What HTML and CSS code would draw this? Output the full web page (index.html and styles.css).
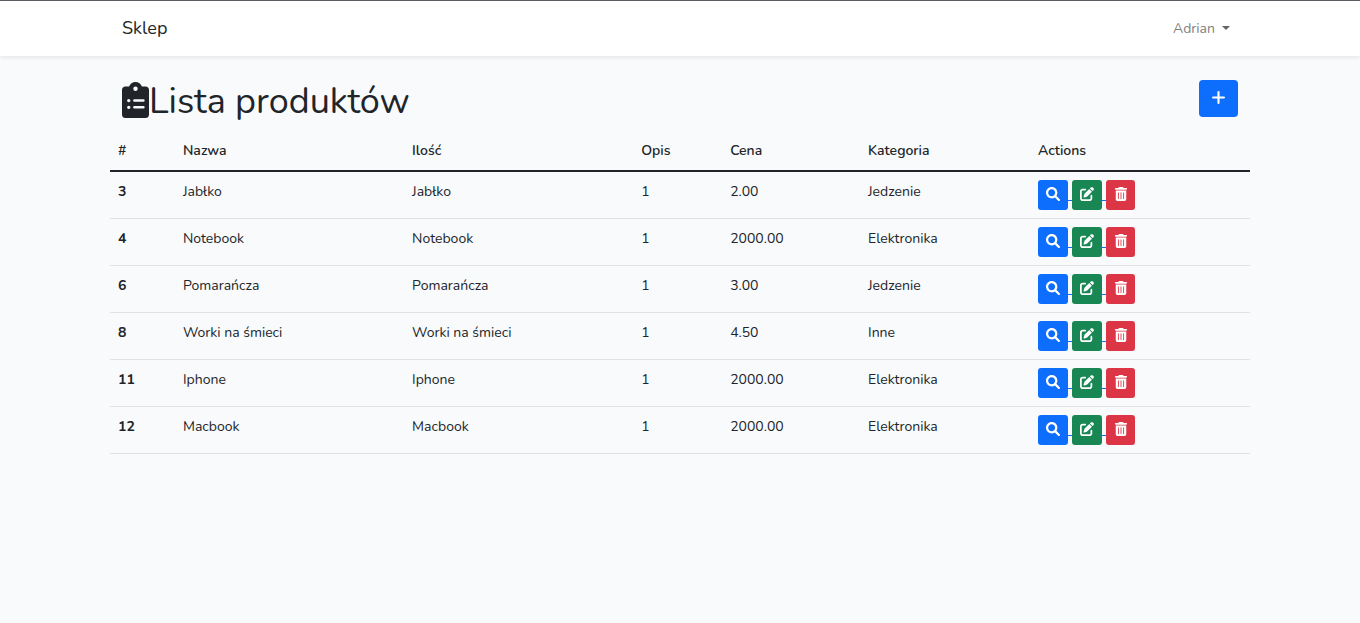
FILE: index.html
```html
<!DOCTYPE html>
<html lang="pl">
<head>
<meta charset="utf-8">
<meta name="viewport" content="width=device-width, initial-scale=1">
<title>Sklep</title>
<link rel="stylesheet" href="styles.css">
</head>
<body>
<svg class="sprite" aria-hidden="true">
  <symbol id="search" viewBox="0 0 512 512"><path d="M500.3 443.7l-119.7-119.7c27.22-40.41 40.65-90.9 33.46-144.7C401.8 87.79 326.8 13.32 235.2 1.723C99.01-15.51-15.51 99.01 1.724 235.2c11.6 91.64 86.08 166.7 177.6 178.9c53.8 7.189 104.3-6.236 144.7-33.46l119.7 119.7c15.62 15.62 40.95 15.62 56.57 0C515.9 484.7 515.9 459.3 500.3 443.7zM79.1 208c0-70.58 57.42-128 128-128s128 57.42 128 128c0 70.58-57.42 128-128 128S79.1 278.6 79.1 208z"/></symbol>
  <symbol id="edit" viewBox="0 0 512 512"><path d="M490.3 40.4C512.2 62.27 512.2 97.73 490.3 119.6L460.3 149.7L362.3 51.72L392.4 21.66C414.3-.2135 449.7-.2135 471.6 21.66L490.3 40.4zM172.4 241.7L339.7 74.34L437.7 172.3L270.3 339.6C264.2 345.8 256.7 350.4 248.4 353.2L159.6 382.8C150.1 385.6 141.5 383.4 135 376.1C128.6 370.5 126.4 361 129.2 352.4L158.8 263.6C161.6 255.3 166.2 247.8 172.4 241.7V241.7zM192 63.1C209.7 63.1 224 78.33 224 95.1C224 113.7 209.7 127.1 192 127.1H96C78.33 127.1 64 142.3 64 159.1V416C64 433.7 78.33 448 96 448H352C369.7 448 384 433.7 384 416V319.1C384 302.3 398.3 287.1 416 287.1C433.7 287.1 448 302.3 448 319.1V416C448 469 405 512 352 512H96C42.98 512 0 469 0 416V159.1C0 106.1 42.98 63.1 96 63.1H192z"/></symbol>
  <symbol id="trash" viewBox="0 0 448 512"><path fill-rule="evenodd" d="M135.2 17.7C140.6 6.8 151.7 0 163.8 0H284.2c12.1 0 23.2 6.8 28.6 17.7L320 32h96c17.7 0 32 14.3 32 32s-14.3 32-32 32H32C14.3 96 0 81.7 0 64S14.3 32 32 32h96l7.2-14.3zM32 128H416V448c0 35.3-28.7 64-64 64H96c-35.3 0-64-28.7-64-64V128zm96 64c-8.8 0-16 7.2-16 16V432c0 8.8 7.2 16 16 16s16-7.2 16-16V208c0-8.8-7.2-16-16-16zm96 0c-8.8 0-16 7.2-16 16V432c0 8.8 7.2 16 16 16s16-7.2 16-16V208c0-8.8-7.2-16-16-16zm96 0c-8.8 0-16 7.2-16 16V432c0 8.8 7.2 16 16 16s16-7.2 16-16V208c0-8.8-7.2-16-16-16z"/></symbol>
</svg>

<header class="navbar">
  <nav class="container navbar-inner">
    <a class="brand" href="#">Sklep</a>
    <button class="user-menu" type="button" aria-haspopup="true">Adrian <span class="caret"></span></button>
  </nav>
</header>

<main class="container">
  <div class="page-head">
    <h1 class="title">
      <svg class="title-icon" viewBox="0 0 384 512" aria-hidden="true"><path fill-rule="evenodd" d="M336 64h-53C270 27 234 0 192 0s-78 27-91 64H48C21.500 64 0 85.500 0 112v352c0 26.500 21.500 48 48 48h288c26.500 0 48-21.500 48-48V112c0-26.500-21.500-48-48-48zM192 64a32 32 0 1 1 0 64 32 32 0 1 1 0-64zM96 240a24 24 0 1 1 0 48 24 24 0 1 1 0-48zM96 336a24 24 0 1 1 0 48 24 24 0 1 1 0-48zM176 246h128a18 18 0 0 1 0 36H176a18 18 0 0 1 0-36zM176 342h128a18 18 0 0 1 0 36H176a18 18 0 0 1 0-36z"/></svg>Lista produktów</h1>
    <button class="btn btn-add" type="button" aria-label="Dodaj"><svg class="plus" viewBox="0 0 12 12" aria-hidden="true"><path d="M6 1v10M1 6h10"/></svg></button>
  </div>

  <table class="products">
    <colgroup><col class="col-id"><col class="col-name"><col class="col-name"><col class="col-desc"><col class="col-price"><col class="col-category"><col></colgroup>
    <thead>
      <tr><th scope="col">#</th><th scope="col">Nazwa</th><th scope="col">Ilość</th><th scope="col">Opis</th><th scope="col">Cena</th><th scope="col">Kategoria</th><th scope="col">Actions</th></tr>
    </thead>
    <tbody>
      <tr><th scope="row">3</th><td>Jabłko</td><td>Jabłko</td><td>1</td><td>2.00</td><td>Jedzenie</td><td><div class="actions"><button class="btn view" type="button" aria-label="Pokaż"><svg class="icon"><use href="#search"/></svg></button><span class="joint"></span><button class="btn edit" type="button" aria-label="Edytuj"><svg class="icon"><use href="#edit"/></svg></button><span class="joint"></span><button class="btn delete" type="button" aria-label="Usuń"><svg class="icon"><use href="#trash"/></svg></button></div></td></tr>
      <tr><th scope="row">4</th><td>Notebook</td><td>Notebook</td><td>1</td><td>2000.00</td><td>Elektronika</td><td><div class="actions"><button class="btn view" type="button" aria-label="Pokaż"><svg class="icon"><use href="#search"/></svg></button><span class="joint"></span><button class="btn edit" type="button" aria-label="Edytuj"><svg class="icon"><use href="#edit"/></svg></button><span class="joint"></span><button class="btn delete" type="button" aria-label="Usuń"><svg class="icon"><use href="#trash"/></svg></button></div></td></tr>
      <tr><th scope="row">6</th><td>Pomarańcza</td><td>Pomarańcza</td><td>1</td><td>3.00</td><td>Jedzenie</td><td><div class="actions"><button class="btn view" type="button" aria-label="Pokaż"><svg class="icon"><use href="#search"/></svg></button><span class="joint"></span><button class="btn edit" type="button" aria-label="Edytuj"><svg class="icon"><use href="#edit"/></svg></button><span class="joint"></span><button class="btn delete" type="button" aria-label="Usuń"><svg class="icon"><use href="#trash"/></svg></button></div></td></tr>
      <tr><th scope="row">8</th><td>Worki na śmieci</td><td>Worki na śmieci</td><td>1</td><td>4.50</td><td>Inne</td><td><div class="actions"><button class="btn view" type="button" aria-label="Pokaż"><svg class="icon"><use href="#search"/></svg></button><span class="joint"></span><button class="btn edit" type="button" aria-label="Edytuj"><svg class="icon"><use href="#edit"/></svg></button><span class="joint"></span><button class="btn delete" type="button" aria-label="Usuń"><svg class="icon"><use href="#trash"/></svg></button></div></td></tr>
      <tr><th scope="row">11</th><td>Iphone</td><td>Iphone</td><td>1</td><td>2000.00</td><td>Elektronika</td><td><div class="actions"><button class="btn view" type="button" aria-label="Pokaż"><svg class="icon"><use href="#search"/></svg></button><span class="joint"></span><button class="btn edit" type="button" aria-label="Edytuj"><svg class="icon"><use href="#edit"/></svg></button><span class="joint"></span><button class="btn delete" type="button" aria-label="Usuń"><svg class="icon"><use href="#trash"/></svg></button></div></td></tr>
      <tr><th scope="row">12</th><td>Macbook</td><td>Macbook</td><td>1</td><td>2000.00</td><td>Elektronika</td><td><div class="actions"><button class="btn view" type="button" aria-label="Pokaż"><svg class="icon"><use href="#search"/></svg></button><span class="joint"></span><button class="btn edit" type="button" aria-label="Edytuj"><svg class="icon"><use href="#edit"/></svg></button><span class="joint"></span><button class="btn delete" type="button" aria-label="Usuń"><svg class="icon"><use href="#trash"/></svg></button></div></td></tr>
    </tbody>
  </table>
</main>
</body>
</html>
```
FILE: styles.css
```css
* { box-sizing: border-box; }

body {
  margin: 0;
  background: #f8fafc;
  color: #212529;
  font-family: Nunito, "Open Sans", "Noto Sans", sans-serif;
  font-size: 14px;
  font-weight: 400;
  line-height: 23px;
}

.sprite { display: none; }

.container {
  max-width: 1140px;
  margin: 0 auto;
}

.navbar {
  border-top: 1px solid #5d5b62;
  background: #fff;
  box-shadow: 0 2px 4px rgba(0, 0, 0, 0.075);
}

.navbar-inner {
  display: flex;
  align-items: center;
  justify-content: space-between;
  padding: 13px 12px 13px;
}

.brand {
  color: #212529;
  font-size: 18px;
  line-height: 29px;
  text-decoration: none;
}

.user-menu {
  display: flex;
  align-items: center;
  gap: 7px;
  padding: 0 8px;
  border: 0;
  background: none;
  color: #808080;
  font: inherit;
}

.caret {
  margin-bottom: 2px;
  border: 4px solid transparent;
  border-top-color: #666;
  border-bottom: 0;
}

.page-head {
  display: flex;
  align-items: flex-start;
  justify-content: space-between;
  padding: 24px 12px 0;
}

.title {
  display: flex;
  align-items: flex-start;
  margin: 0;
  font-size: 36px;
  font-weight: 400;
  line-height: 43px;
}

.title-icon {
  width: 27px;
  height: 36px;
  margin-top: 2px;
  fill: #212529;
}

.btn {
  display: flex;
  align-items: center;
  justify-content: center;
  width: 30px;
  height: 30px;
  padding: 0 0 2px;
  border: 0;
  border-radius: 3px;
  color: #fff;
}

.btn-add {
  width: 39px;
  height: 37px;
  border-radius: 4px;
  background: #0d6efd;
}

.plus {
  width: 13px;
  height: 13px;
  fill: none;
  stroke: #fff;
  stroke-width: 2;
  stroke-linecap: round;
}

.products {
  width: 100%;
  margin-top: 8px;
  border-collapse: separate;
  border-spacing: 0;
  table-layout: fixed;
}

.col-id { width: 5.7%; }
.col-name { width: 20.1%; }
.col-desc { width: 7.8%; }
.col-price { width: 12.1%; }
.col-category { width: 14.9%; }

.products th,
.products td {
  padding: 8px 8px;
  border-bottom: 1px solid #dee2e6;
  text-align: left;
  vertical-align: top;
}

.products th { font-weight: 600; }

.products tbody th { font-weight: 700; }

.products thead th {
  border-bottom: 2px solid #212529;
}

.actions { display: flex; }

.joint {
  width: 4px;
  height: 21px;
  border-bottom: 1px solid #0d6efd;
}

.view { background: #0d6efd; }
.edit { background: #198754; }
.delete { width: 29px; padding-left: 1px; background: #dc3545; }

.icon {
  width: 14px;
  height: 14px;
  fill: currentColor;
}
```
